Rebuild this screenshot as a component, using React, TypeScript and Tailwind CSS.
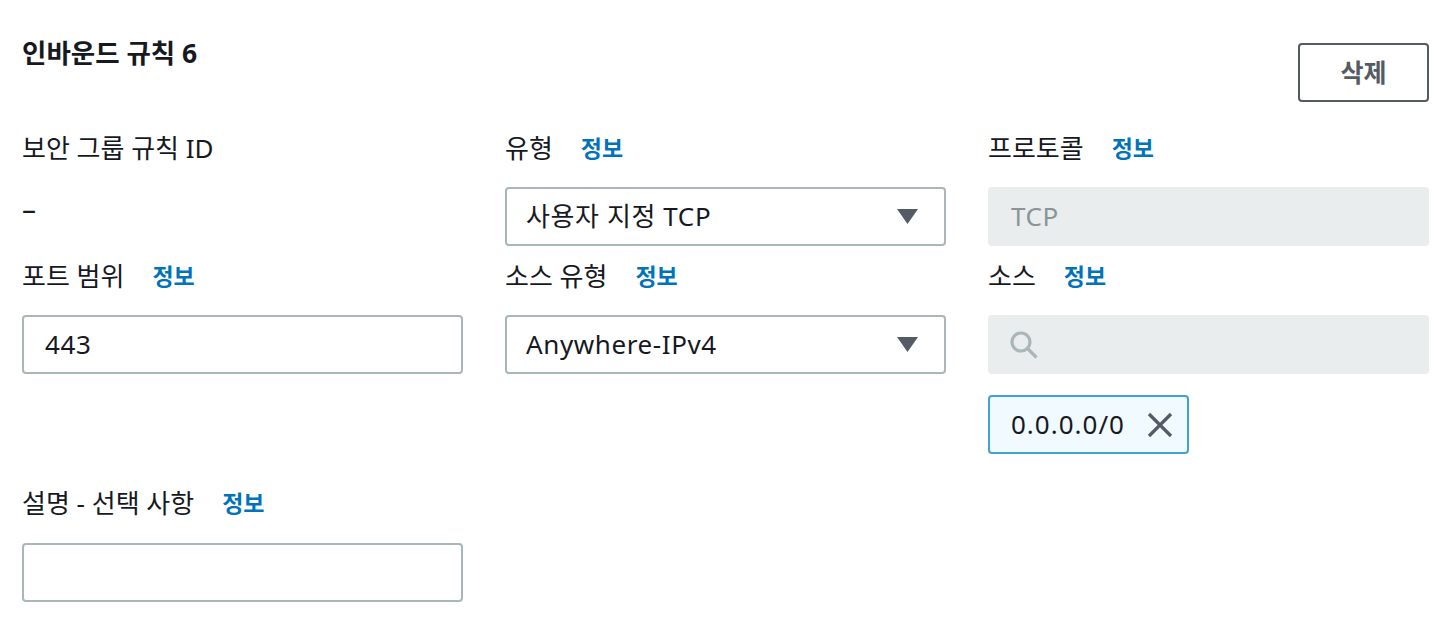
const font = "font-['Noto_Sans','Noto_Sans_CJK_KR',sans-serif]";

const Label = ({ text, info }: { text: string; info?: boolean }) => (
  <div className="flex h-[32px] items-center">
    <span className="text-[26px] leading-[32px] text-[#16191f]">{text}</span>
    {info && (
      <span className="ml-[28px] text-[23px] font-bold leading-[32px] text-[#0073bb]">정보</span>
    )}
  </div>
);

const Caret = () => (
  <svg width="21" height="15" viewBox="0 0 21 15" className="shrink-0">
    <path d="M0 0h21L10.5 15z" fill="#545b64" />
  </svg>
);

const Select = ({ value }: { value: string }) => (
  <div className="flex h-[59px] items-center justify-between rounded-[4px] border-2 border-[#aab7b8] bg-white pl-[19px] pr-[26px]">
    <span className="text-[26px] tracking-[0.6px] text-[#16191f]">{value}</span>
    <Caret />
  </div>
);

const TextInput = ({ value }: { value?: string }) => (
  <div className="flex h-[59px] items-center rounded-[4px] border-2 border-[#aab7b8] bg-white pl-[21px]">
    <span className="text-[26px] tracking-[0.6px] text-[#16191f]">{value}</span>
  </div>
);

export default function App() {
  return (
    <div className={`${font} min-h-screen bg-white pl-[22px] pr-[25px] pt-[37px]`}>
      {/* header */}
      <div className="flex items-start justify-between">
        <h2 className="text-[26.5px] font-bold leading-[32px] text-[#16191f]">인바운드 규칙 6</h2>
        <button className="mt-[6px] flex h-[59px] w-[131px] items-center justify-center rounded-[4px] border-2 border-[#545b64] bg-white text-[25px] font-bold text-[#545b64]">
          삭제
        </button>
      </div>

      {/* row 1 */}
      <div className="mt-[30px] grid grid-cols-3 gap-x-[42px]">
        <div>
          <Label text="보안 그룹 규칙 ID" />
          <div className="mt-[23px] flex h-[59px] items-start pt-[5px]">
            <span className="text-[28px] leading-[32px] text-[#16191f]">–</span>
          </div>
        </div>
        <div>
          <Label text="유형" info />
          <div className="mt-[23px]">
            <Select value="사용자 지정 TCP" />
          </div>
        </div>
        <div>
          <Label text="프로토콜" info />
          <div className="mt-[23px] flex h-[59px] items-center rounded-[4px] bg-[#eaeded] pl-[23px]">
            <span className="text-[26px] tracking-[0.6px] text-[#879596]">TCP</span>
          </div>
        </div>
      </div>

      {/* row 2 */}
      <div className="mt-[14px] grid grid-cols-3 gap-x-[42px]">
        <div>
          <Label text="포트 범위" info />
          <div className="mt-[23px]">
            <TextInput value="443" />
          </div>
        </div>
        <div>
          <Label text="소스 유형" info />
          <div className="mt-[23px]">
            <Select value="Anywhere-IPv4" />
          </div>
        </div>
        <div>
          <Label text="소스" info />
          <div className="mt-[23px] flex h-[59px] items-center rounded-[4px] bg-[#eaeded] pl-[21px]">
            <svg width="30" height="30" viewBox="0 0 30 30" fill="none" stroke="#aab7b8" strokeWidth="3.2">
              <circle cx="12" cy="12" r="9" />
              <path d="M18.5 18.5l9 9" />
            </svg>
          </div>
          <div className="mt-[21px] inline-flex h-[59px] items-center gap-[22px] rounded-[4px] border-2 border-[#44a2d0] bg-[#f1faff] pl-[21px] pr-[14px]">
            <span className="text-[26px] tracking-[1px] text-[#16191f]">0.0.0.0/0</span>
            <svg width="26" height="26" viewBox="0 0 26 26" stroke="#545b64" strokeWidth="3.2" strokeLinecap="butt">
              <path d="M2 2l22 22M24 2L2 24" />
            </svg>
          </div>
        </div>
      </div>

      {/* row 3 */}
      <div className="mt-[33px] grid grid-cols-3 gap-x-[42px]">
        <div>
          <Label text="설명 - 선택 사항" info />
          <div className="mt-[24px]">
            <TextInput />
          </div>
        </div>
      </div>
    </div>
  );
}
